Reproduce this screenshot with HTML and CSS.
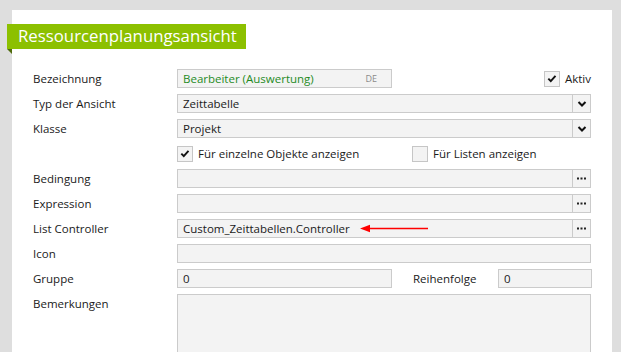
FILE: index.html
```html
<!DOCTYPE html>
<html lang="de">
<head>
<meta charset="utf-8">
<link rel="stylesheet" href="styles.css">
</head>
<body>
<div class="panel">
  <div class="banner">Ressourcenplanungsansicht</div>
  <div class="form">
    <div class="row">
      <div class="label">Bezeichnung</div>
      <div class="field half green"><span>Bearbeiter (Auswertung)</span><span class="lang">DE</span></div>
      <div class="spacer"></div>
      <label class="check"><span class="box"><svg viewBox="0 0 16 16" width="15" height="15"><path d="M3.8 8.2 L6.6 11 L12 5" fill="none" stroke="#111" stroke-width="2.2"/></svg></span>Aktiv</label>
    </div>
    <div class="row">
      <div class="label">Typ der Ansicht</div>
      <div class="field full"><span class="val">Zeittabelle</span><span class="btn"><svg viewBox="0 0 10 10" width="10" height="10"><path d="M1.5 3 L5 6.5 L8.5 3" fill="none" stroke="#111" stroke-width="2"/></svg></span></div>
    </div>
    <div class="row">
      <div class="label">Klasse</div>
      <div class="field full"><span class="val">Projekt</span><span class="btn"><svg viewBox="0 0 10 10" width="10" height="10"><path d="M1.5 3 L5 6.5 L8.5 3" fill="none" stroke="#111" stroke-width="2"/></svg></span></div>
    </div>
    <div class="row">
      <div class="label"></div>
      <label class="check wide"><span class="box"><svg viewBox="0 0 16 16" width="15" height="15"><path d="M3.8 8.2 L6.6 11 L12 5" fill="none" stroke="#111" stroke-width="2.2"/></svg></span>Für einzelne Objekte anzeigen</label>
      <label class="check"><span class="box"></span>Für Listen anzeigen</label>
    </div>
    <div class="row">
      <div class="label">Bedingung</div>
      <div class="field full"><span class="val"></span><span class="btn"><svg class="dots" width="9" height="3" viewBox="0 0 9 3"><rect x="0" y="0.5" width="2" height="2" fill="#222"/><rect x="3.5" y="0.5" width="2" height="2" fill="#222"/><rect x="7" y="0.5" width="2" height="2" fill="#222"/></svg></span></div>
    </div>
    <div class="row">
      <div class="label">Expression</div>
      <div class="field full"><span class="val"></span><span class="btn"><svg class="dots" width="9" height="3" viewBox="0 0 9 3"><rect x="0" y="0.5" width="2" height="2" fill="#222"/><rect x="3.5" y="0.5" width="2" height="2" fill="#222"/><rect x="7" y="0.5" width="2" height="2" fill="#222"/></svg></span></div>
    </div>
    <div class="row">
      <div class="label">List Controller</div>
      <div class="field full"><span class="val">Custom_Zeittabellen.Controller</span><span class="btn"><svg class="dots" width="9" height="3" viewBox="0 0 9 3"><rect x="0" y="0.5" width="2" height="2" fill="#222"/><rect x="3.5" y="0.5" width="2" height="2" fill="#222"/><rect x="7" y="0.5" width="2" height="2" fill="#222"/></svg></span>
        <svg class="arrow" width="70" height="9" viewBox="0 0 70 9"><path d="M8 4.5 H68" stroke="#f00" stroke-width="1.3"/><path d="M0 4.5 L10 0.8 L10 8.2 Z" fill="#f00"/></svg>
      </div>
    </div>
    <div class="row">
      <div class="label">Icon</div>
      <div class="field full"></div>
    </div>
    <div class="row">
      <div class="label">Gruppe</div>
      <div class="field half"><span class="val">0</span></div>
      <div class="label mid">Reihenfolge</div>
      <div class="field small"><span class="val">0</span></div>
    </div>
    <div class="row top">
      <div class="label">Bemerkungen</div>
      <div class="field full area"></div>
    </div>
  </div>
</div>
</body>
</html>
```
FILE: styles.css
```css
* { box-sizing: border-box; }
html, body { margin: 0; padding: 0; }
body {
  background: #dedede;
  font-family: "Open Sans", "Noto Sans", sans-serif;
  font-size: 11.5px;
  color: #1a1a1a;
  width: 621px;
  height: 352px;
  overflow: hidden;
}
.panel {
  margin: 10px 0 0 12px;
  width: 600px;
  height: 342px;
  background: #fff;
  padding-top: 14px;
}
.banner {
  position: relative;
  margin-left: -5px;
  width: 239px;
  height: 25px;
  background: #8cc000;
  color: #fff;
  font-size: 16.8px;
  line-height: 24px;
  padding-left: 11px;
  white-space: nowrap;
}
.banner::after {
  content: "";
  position: absolute;
  left: 0;
  top: 25px;
  border-top: 5px solid #4f6b0c;
  border-left: 5px solid transparent;
}
.form {
  margin-top: 20px;
  padding-left: 21px;
  display: flex;
  flex-direction: column;
  gap: 6px;
}
.row {
  display: flex;
  align-items: center;
  height: 19px;
}
.row.top { align-items: flex-start; height: 58px; }
.label {
  width: 144px;
  flex: none;
  white-space: nowrap;
}
.row.top .label { line-height: 19px; }
.label.mid { width: 85px; margin-left: 21px; }
.field {
  position: relative;
  height: 19px;
  border: 1px solid #cbcbcb;
  background: #f3f3f3;
  display: flex;
  align-items: center;
  padding-left: 5px;
  white-space: nowrap;
}
.field.full { width: 414px; padding-right: 0; }
.field.half { width: 215px; }
.field.small { width: 94px; }
.field.green { color: #1f8b1f; justify-content: space-between; padding-right: 14px; }
.field.area { height: 58px; border-bottom: none; }
.lang { font-size: 9px; color: #8a8a8a; }
.val { flex: 1; }
.btn {
  width: 18px;
  height: 17px;
  border-left: 1px solid #cbcbcb;
  display: flex;
  align-items: center;
  justify-content: center;
}
.spacer { flex: 1; }
.check {
  display: flex;
  align-items: center;
  gap: 5px;
  white-space: nowrap;
  margin-right: 21px;
}
.check.wide { width: 235px; margin-right: 0; }
.box {
  width: 16px;
  height: 16px;
  border: 1px solid #c6c6c6;
  background: #f3f3f3;
  display: flex;
  align-items: center;
  justify-content: center;
  flex: none;
}
.arrow { position: absolute; left: 182px; top: 4px; }
```
